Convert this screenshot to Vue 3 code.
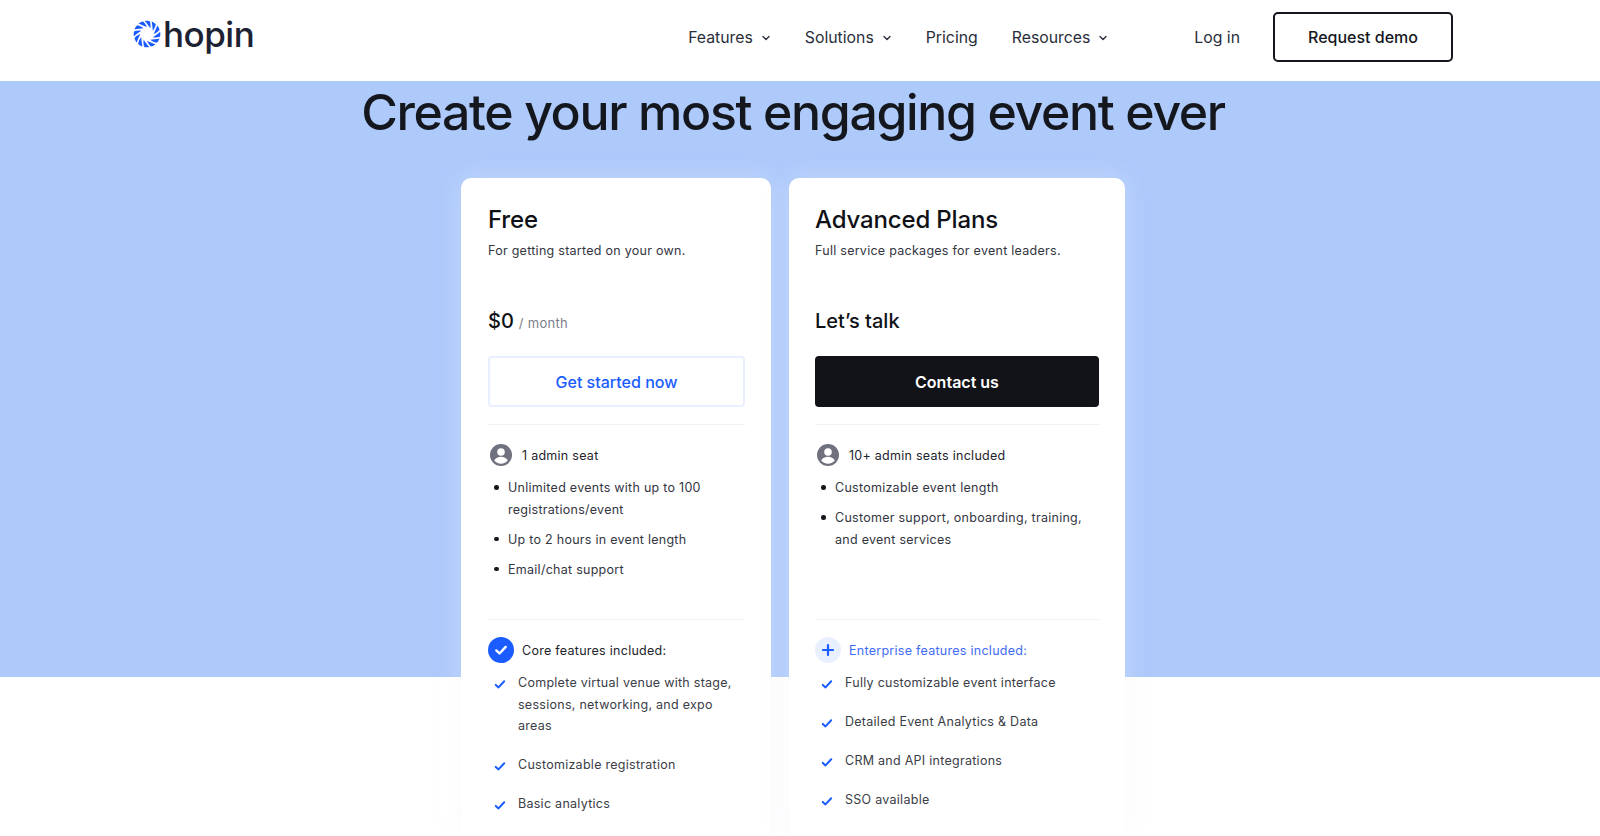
<template>
  <div class="page">
    <header class="topbar">
      <a class="logo">
        <svg class="logo-mark" viewBox="0 0 28 28" width="28" height="28">
          <path
            v-for="n in 12"
            :key="n"
            d="M11.700.9c1.800-.4 3.600-.3 5.100.3.800 2.400 1 4.800.5 7C15.800 6 14 3.300 11.700.9z"
            fill="#1a5cff"
            :transform="`rotate(${n * 30} 14 14)`"
          />
        </svg>
        <span class="logo-text">hopin</span>
      </a>
      <nav class="links">
        <a v-for="link in links" :key="link.label" class="link">
          {{ link.label }}
          <svg v-if="link.menu" class="chev" viewBox="0 0 10 10" width="10" height="10">
            <path d="M2 3.500l3 3 3-3" fill="none" stroke="#2a2e3b" stroke-width="1.400" stroke-linecap="round" stroke-linejoin="round" />
          </svg>
        </a>
      </nav>
      <a class="login">Log in</a>
      <a class="demo">Request demo</a>
    </header>

    <main class="hero">
      <h1>Create your most engaging event ever</h1>
      <div class="plans">
        <section v-for="plan in plans" :key="plan.name" class="plan" :class="plan.cls">
          <h2>{{ plan.name }}</h2>
          <p class="tagline">{{ plan.tagline }}</p>
          <div class="price">
            {{ plan.price }}<span v-if="plan.per" class="per">{{ plan.per }}</span>
          </div>
          <a class="cta">{{ plan.cta }}</a>
          <div class="seats">
            <div class="row-head">
              <svg class="head-icon" viewBox="0 0 26 26" width="26" height="26">
                <circle cx="13" cy="13" r="11" fill="#6f717f" />
                <circle cx="13" cy="10" r="3.800" fill="#fff" />
                <path d="M6.200 18.500c1.400-2.600 3.900-3.700 6.800-3.700s5.400 1.100 6.800 3.700c-1.600 2-4 3.200-6.800 3.200s-5.200-1.200-6.800-3.200z" fill="#fff" />
              </svg>
              <span>{{ plan.seats }}</span>
            </div>
            <ul class="bullets">
              <li v-for="item in plan.bullets" :key="item">{{ item }}</li>
            </ul>
          </div>
          <div class="features">
            <div class="row-head" :class="{ enterprise: plan.plus }">
              <svg v-if="plan.plus" class="head-icon" viewBox="0 0 26 26" width="26" height="26">
                <circle cx="13" cy="13" r="13" fill="#e8effe" />
                <path d="M13 8v10M8 13h10" stroke="#1a5cff" stroke-width="2.200" stroke-linecap="round" />
              </svg>
              <svg v-else class="head-icon" viewBox="0 0 26 26" width="26" height="26">
                <circle cx="13" cy="13" r="13" fill="#1a5cff" />
                <path d="M8.300 13.400l3.200 3.100 6.200-6.600" fill="none" stroke="#fff" stroke-width="2.400" stroke-linecap="round" stroke-linejoin="round" />
              </svg>
              <span>{{ plan.featuresTitle }}</span>
            </div>
            <ul class="checks">
              <li v-for="item in plan.features" :key="item">
                <svg class="tick" viewBox="0 0 12 12" width="12" height="12">
                  <path d="M1.800 6.900l2.700 2.500 5.700-6.200" fill="none" stroke="#1a5cff" stroke-width="2" stroke-linecap="round" stroke-linejoin="round" />
                </svg>
                <span>{{ item }}</span>
              </li>
            </ul>
          </div>
        </section>
      </div>
    </main>
  </div>
</template>

<script setup>
const links = [
  { label: 'Features', menu: true },
  { label: 'Solutions', menu: true },
  { label: 'Pricing', menu: false },
  { label: 'Resources', menu: true },
]

const plans = [
  {
    name: 'Free',
    cls: 'free',
    tagline: 'For getting started on your own.',
    price: '$0',
    per: '/ month',
    cta: 'Get started now',
    seats: '1 admin seat',
    bullets: [
      'Unlimited events with up to 100 registrations/event',
      'Up to 2 hours in event length',
      'Email/chat support',
    ],
    featuresTitle: 'Core features included:',
    plus: false,
    features: [
      'Complete virtual venue with stage, sessions, networking, and expo areas',
      'Customizable registration',
      'Basic analytics',
    ],
  },
  {
    name: 'Advanced Plans',
    cls: 'advanced',
    tagline: 'Full service packages for event leaders.',
    price: 'Let’s talk',
    per: '',
    cta: 'Contact us',
    seats: '10+ admin seats included',
    bullets: [
      'Customizable event length',
      'Customer support, onboarding, training, and event services',
    ],
    featuresTitle: 'Enterprise features included:',
    plus: true,
    features: [
      'Fully customizable event interface',
      'Detailed Event Analytics & Data',
      'CRM and API integrations',
      'SSO available',
    ],
  },
]
</script>

<style scoped>
.page {
  height: 836px;
  overflow: hidden;
  background: #fff;
  font-family: Inter, "Liberation Sans", sans-serif;
  color: #15171e;
}

.topbar {
  height: 81px;
  box-sizing: border-box;
  display: flex;
  align-items: center;
  padding: 0 147px 7px 133px;
  background: #fff;
}

.logo {
  display: flex;
  align-items: center;
  gap: 2px;
}

.logo-mark {
  display: block;
  margin-top: -6px;
}

.logo-text {
  font-size: 35px;
  line-height: 40px;
  font-weight: 500;
  letter-spacing: -0.500px;
  color: #1d2233;
  margin-top: -6px;
}

.links {
  display: flex;
  gap: 34px;
  margin-left: auto;
}

.link {
  display: flex;
  align-items: center;
  gap: 8px;
  font-size: 15.800px;
  color: #2a2e3b;
}

.chev {
  display: block;
  margin-top: 1px;
}

.login {
  margin-left: 86px;
  font-size: 15.800px;
  color: #2a2e3b;
}

.demo {
  margin-left: 33px;
  width: 180px;
  height: 50px;
  box-sizing: border-box;
  display: flex;
  align-items: center;
  justify-content: center;
  border: 2px solid #15171e;
  border-radius: 5px;
  font-size: 16px;
  font-weight: 500;
  color: #15171e;
}

.hero {
  height: 755px;
  background: linear-gradient(#aecafb 596px, #fff 596px);
  display: flex;
  flex-direction: column;
  align-items: center;
}

h1 {
  margin: 0;
  width: 100%;
  box-sizing: border-box;
  padding-right: 14px;
  height: 97px;
  text-align: center;
  font-size: 50px;
  line-height: 63px;
  font-weight: 500;
  letter-spacing: -1.370px;
  color: #15171e;
}

.plans {
  display: flex;
  gap: 18px;
  align-items: flex-start;
  margin-left: -14px;
}

.plan {
  box-sizing: border-box;
  height: 658px;
  padding: 26px 26px 0;
  background: #fff;
  border-radius: 10px;
  box-shadow: 0 0 22px rgba(236, 239, 246, 0.35);
}

.free {
  width: 310px;
  padding-left: 27px;
}

.advanced {
  width: 336px;
}

h2 {
  margin: 0;
  font-size: 24px;
  line-height: 32px;
  font-weight: 500;
  letter-spacing: -0.150px;
  color: #0f1116;
}

.tagline {
  margin: 0;
  height: 64px;
  padding-top: 6px;
  box-sizing: border-box;
  font-size: 12.500px;
  line-height: 18px;
  letter-spacing: 0.270px;
  color: #33363f;
}

.price {
  height: 45px;
  padding-top: 8px;
  box-sizing: border-box;
  font-size: 20px;
  line-height: 26px;
  font-weight: 500;
  color: #0f1116;
}

.per {
  margin-left: 5px;
  font-size: 13px;
  font-weight: 400;
  letter-spacing: 0.300px;
  color: #7c7e88;
}

.cta {
  display: flex;
  align-items: center;
  justify-content: center;
  height: 51px;
  margin-top: 11px;
  box-sizing: border-box;
  border-radius: 4px;
  font-size: 16px;
  font-weight: 500;
}

.free .cta {
  border: 2px solid #e8effe;
  color: #1a5cff;
}

.advanced .cta {
  background: #121318;
  color: #fff;
  font-weight: 600;
}

.seats {
  height: 196px;
  box-sizing: border-box;
  margin-top: 17px;
  padding-top: 17px;
  border-top: 1px solid #eff0f3;
  border-bottom: 1px solid #eff0f3;
}

.features {
  padding-top: 17px;
}

.row-head {
  display: flex;
  align-items: center;
  gap: 8px;
  height: 26px;
  font-size: 12.500px;
  letter-spacing: 0.270px;
  color: #22242c;
}

.head-icon {
  display: block;
  flex: none;
}

.enterprise {
  color: #3f6cf6;
}

.bullets {
  margin: 9px 0 0;
  padding: 0 0 0 20px;
  list-style: none;
}

.bullets li {
  position: relative;
  margin-bottom: 8.500px;
  font-size: 12.500px;
  line-height: 21.500px;
  letter-spacing: 0.270px;
  color: #33363f;
}

.bullets li::before {
  content: "";
  position: absolute;
  left: -14px;
  top: 8px;
  width: 4.500px;
  height: 4.500px;
  border-radius: 50%;
  background: #15171e;
}

.checks {
  margin: 9px 0 0;
  padding: 0;
  list-style: none;
}

.checks li {
  display: flex;
  gap: 12px;
  margin-bottom: 17.500px;
  padding-left: 6px;
  font-size: 12.500px;
  line-height: 21.500px;
  letter-spacing: 0.270px;
  color: #3a3d46;
}

.tick {
  flex: none;
  display: block;
  margin-top: 6px;
}
</style>
